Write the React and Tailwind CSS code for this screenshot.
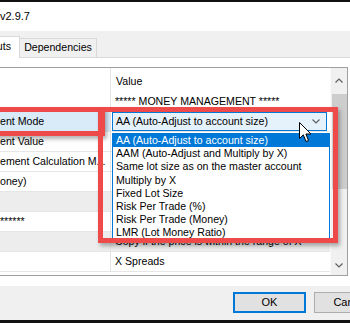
import React from 'react'

const rows = [
  { left: '', right: '***** MONEY MANAGEMENT *****' },
  { left: 'ent Mode', right: '', selected: true },
  { left: 'ent Value', right: '' },
  { left: 'ement Calculation M...', right: '' },
  { left: 'oney)', right: '' },
  { left: '', right: '', shaded: true },
  { left: '******', right: '' },
  { left: '', right: 'Copy if the price is within the range of X', shaded: true },
  { left: '', right: 'X Spreads' },
]

const options = [
  'AA (Auto-Adjust to account size)',
  'AAM (Auto-Adjust and Multiply by X)',
  'Same lot size as on the master account',
  'Multiply by X',
  'Fixed Lot Size',
  'Risk Per Trade (%)',
  'Risk Per Trade (Money)',
  'LMR (Lot Money Ratio)',
]

function Chevron({ up }) {
  return (
    <svg width="8" height="5" viewBox="0 0 8 5" className="block">
      <path d={up ? 'M0.5 4.5 L4 1 L7.5 4.5' : 'M0.5 0.5 L4 4 L7.5 0.5'} fill="none" stroke="#606060" strokeWidth="1.2" />
    </svg>
  )
}

export default function App() {
  return (
    <div className="relative w-[350px] h-[323px] overflow-hidden bg-white font-['Liberation_Sans',Arial,sans-serif] text-[10.6px] text-black leading-none">
      {/* window edge */}
      <div className="h-[2px] bg-[#111]" />

      {/* title bar */}
      <div className="h-[29px] flex items-center text-[11px] pb-[1px]">v2.9.7</div>

      {/* tab strip */}
      <div className="h-[27px] bg-[#f0f0f0] flex items-end border-b border-[#d9d9d9]">
        <div className="h-[22px] w-[20px] bg-white border-r border-t border-[#d9d9d9] -mb-px flex items-center justify-end pr-[8px] pb-[2px]">uts</div>
        <div className="h-[19px] w-[77px] border-r border-t border-[#d9d9d9] flex items-center justify-center pb-[1px]">Dependencies</div>
      </div>

      {/* tab panel */}
      <div className="h-[228px] bg-white pt-[9px] pr-[2px]">
        <div className="h-[209px] flex border-t border-r border-b border-[#a0a0a0]">
          <div className="flex-1 flex flex-col">
            <div className="h-[24px] flex">
              <div className="w-[111px] border-r border-[#e3e3e3]" />
              <div className="flex-1 flex items-center pl-[5px] pt-[2px]">Value</div>
            </div>
            {rows.map((r, i) => (
              <div key={i} className={`h-[20px] flex border-b border-[#e6e6e6] ${r.shaded ? 'bg-[#ededed]' : ''}`}>
                <div className={`w-[111px] border-r border-[#e3e3e3] flex items-center whitespace-nowrap overflow-hidden ${r.selected ? 'bg-[#d9eaf9]' : ''}`}>
                  {r.left}
                </div>
                <div className="flex-1 flex items-center pl-[4px] whitespace-nowrap overflow-hidden">
                  {r.selected ? (
                    <div className="-ml-[3px] h-[19px] w-full bg-[#e5f1fb] border border-[#0078d7] flex items-center justify-between pl-[3px] pr-[6px]">
                      <span>AA (Auto-Adjust to account size)</span>
                      <Chevron />
                    </div>
                  ) : (
                    r.right
                  )}
                </div>
              </div>
            ))}
          </div>

          {/* scrollbar */}
          <div className="w-[17px] bg-[#f0f0f0] border-l border-[#fafafa] flex flex-col items-center">
            <div className="h-[22px] flex items-center justify-center pt-[2px]"><Chevron up /></div>
            <div className="mt-[4px] h-[95px] w-[15px] bg-[#cdcdcd]" />
            <div className="flex-1" />
            <div className="h-[17px] flex items-center justify-center pb-[2px]"><Chevron /></div>
          </div>
        </div>
      </div>

      {/* button bar */}
      <div className="h-[34px] bg-[#f0f0f0] flex items-start pt-[6px] pl-[233px] gap-[8px]">
        <button className="h-[21px] w-[73px] shrink-0 bg-[#e1e1e1] border-2 border-[#0078d7] text-[11px] flex items-center justify-center">OK</button>
        <button className="h-[21px] w-[73px] shrink-0 bg-[#e1e1e1] border border-[#adadad] text-[11px] flex items-center justify-center">Cancel</button>
      </div>
      <div className="h-[3px] bg-[#111]" />

      {/* open dropdown list */}
      <div className="absolute left-[112px] top-[133px] w-[218px] h-[107px] bg-white border border-[#0078d7] pt-0">
        {options.map((o, i) => (
          <div key={o} className={`h-[13.1px] flex items-center pl-[3px] whitespace-nowrap ${i === 0 ? 'bg-[#0078d7] text-white' : ''}`}>{o}</div>
        ))}
      </div>

      {/* annotation boxes */}
      <div className="absolute left-[-6px] top-[107px] w-[111px] h-[29px] border-[5px] border-[#ef4a4a] shadow-[2px_3px_4px_rgba(0,0,0,0.3)]" />
      <div className="absolute left-[98px] top-[107px] w-[240px] h-[136px] border-[5px] border-[#ef4a4a] shadow-[2px_3px_4px_rgba(0,0,0,0.3)]" />

      {/* mouse cursor */}
      <svg className="absolute left-[299px] top-[122px]" width="13" height="21" viewBox="0 0 13 21">
        <path d="M0.5 0.5 L0.5 16.5 L4.3 12.8 L7 19.5 L9.5 18.5 L6.9 12 L12 12 Z" fill="#fff" stroke="#000" strokeWidth="1" strokeLinejoin="round" />
      </svg>
    </div>
  )
}
